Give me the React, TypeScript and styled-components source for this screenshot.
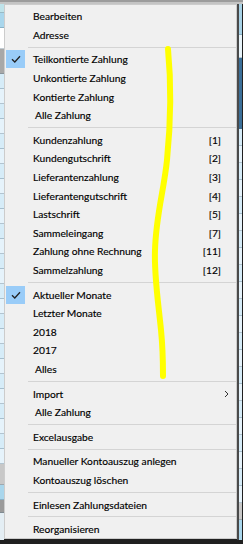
import React from "react";
import styled, { createGlobalStyle } from "styled-components";

const Global = createGlobalStyle`
  html, body { margin: 0; padding: 0; }
  body {
    width: 243px;
    height: 544px;
    overflow: hidden;
    background: #1e1e1e;
    font-family: Lato, "Noto Sans", "DejaVu Sans", sans-serif;
  }
`;

const Screen = styled.div`
  position: relative;
  width: 243px;
  height: 544px;
  overflow: hidden;
  display: flex;
  flex-direction: column;
  background: #202020;
`;

const TopBar = styled.div`
  height: 4px;
  flex: none;
  background: linear-gradient(#9c9c9c 0 2px, #c4c4c4 2px 4px);
`;

const Middle = styled.div`
  display: flex;
  flex: none;
  height: 536px;
  overflow: hidden;
`;

const SideStrip = styled.div<{ $w: number }>`
  width: ${(p) => p.$w}px;
  flex: none;
  display: flex;
  flex-direction: column;
  overflow: hidden;
`;

const Cell = styled.div<{ $h: number; $c: string }>`
  height: ${(p) => p.$h}px;
  flex: none;
  background: ${(p) => p.$c};
  border-bottom: 1px solid rgba(80, 110, 130, 0.35);
`;

const RightEdge = styled.div`
  width: 2px;
  flex: none;
  background: #4a4a4a;
`;

const Menu = styled.div`
  width: 231px;
  flex: none;
  align-self: flex-start;
  background: #f0f0f0;
  border: 1px solid #cccccc;
  padding: 2px 0 0 0;
  display: flex;
  flex-direction: column;
  color: #000000;
  font-size: 10.25px;
  -webkit-text-stroke: 0.15px #000;
`;

const Row = styled.div`
  height: 18.6px;
  flex: none;
  display: flex;
  align-items: center;
  padding-right: 15px;
`;

const CheckCell = styled.div<{ $on?: boolean }>`
  width: 19px;
  height: 18px;
  margin-left: 1px;
  flex: none;
  display: flex;
  align-items: center;
  justify-content: center;
  background: ${(p) => (p.$on ? "#99ccf8" : "transparent")};
`;

const Label = styled.span<{ $indent?: boolean }>`
  margin-left: ${(p) => (p.$indent ? 10 : 8)}px;
  flex: 1;
  white-space: nowrap;
`;

const Shortcut = styled.span`
  white-space: nowrap;
`;

const Arrow = styled.span`
  margin-right: -8px;
  display: flex;
  align-items: center;
`;

const Separator = styled.div`
  height: 6px;
  flex: none;
  display: flex;
  align-items: center;
  padding-left: 23px;
  &::after {
    content: "";
    display: block;
    flex: 1;
    height: 1px;
    background: #d4d4d4;
  }
`;

const Highlighter = styled.svg`
  position: absolute;
  left: 0;
  top: 0;
  pointer-events: none;
`;

type Item = { label?: string; check?: boolean; key?: string; sub?: boolean; indent?: boolean; sep?: boolean };

const items: Item[] = [
  { label: "Bearbeiten" },
  { label: "Adresse" },
  { sep: true },
  { label: "Teilkontierte Zahlung", check: true },
  { label: "Unkontierte Zahlung" },
  { label: "Kontierte Zahlung" },
  { label: "Alle Zahlung", indent: true },
  { sep: true },
  { label: "Kundenzahlung", key: "[1]" },
  { label: "Kundengutschrift", key: "[2]" },
  { label: "Lieferantenzahlung", key: "[3]" },
  { label: "Lieferantengutschrift", key: "[4]" },
  { label: "Lastschrift", key: "[5]" },
  { label: "Sammeleingang", key: "[7]" },
  { label: "Zahlung ohne Rechnung", key: "[11]" },
  { label: "Sammelzahlung", key: "[12]" },
  { sep: true },
  { label: "Aktueller Monate", check: true },
  { label: "Letzter Monate" },
  { label: "2018" },
  { label: "2017" },
  { label: "Alles", indent: true },
  { sep: true },
  { label: "Import", sub: true },
  { label: "Alle Zahlung", indent: true },
  { sep: true },
  { label: "Excelausgabe" },
  { sep: true },
  { label: "Manueller Kontoauszug anlegen" },
  { label: "Kontoauszug löschen" },
  { sep: true },
  { label: "Einlesen Zahlungsdateien" },
  { sep: true },
  { label: "Reorganisieren" },
];

const stripe = (n: number, h: number, a: string, b: string): [number, string][] =>
  Array.from({ length: n }, (_, i) => [h, i % 2 ? b : a] as [number, string]);

const leftCells: [number, string][] = [
  [8, "#bfe3ea"],
  [14, "#a9d6ec"],
  [20, "#ffffff"],
  [24, "#a8a8a8"],
  ...stripe(26, 14, "#d6ecf8", "#e6f3fb"),
  [20, "#c8c8c8"],
  [14, "#a9d6ec"],
  [12, "#9a9a9a"],
  [40, "#e4eef4"],
];

const rightCells: [number, string][] = [
  [30, "#a8d2e6"],
  [22, "#e8f4fa"],
  [70, "#3b6f98"],
  ...stripe(22, 16, "#d6ecf8", "#e6f3fb"),
  [16, "#c8c8c8"],
  [20, "#a9d6ec"],
  [40, "#c0c0c0"],
];

const Check = () => (
  <svg width="10" height="8" viewBox="0 0 10 8">
    <path d="M1 4.2 L3.8 7 L9 1.2" fill="none" stroke="#222" strokeWidth="1.3" />
  </svg>
);

const Chevron = () => (
  <svg width="5" height="8" viewBox="0 0 5 8">
    <path d="M1 1 L4 4 L1 7" fill="none" stroke="#333" strokeWidth="1" />
  </svg>
);

export default function App() {
  return (
    <>
      <Global />
      <Screen>
        <TopBar />
        <Middle>
          <SideStrip $w={4}>
            {leftCells.map(([h, c], i) => (
              <Cell key={i} $h={h} $c={c} />
            ))}
          </SideStrip>
          <Menu>
            {items.map((it, i) =>
              it.sep ? (
                <Separator key={i} />
              ) : (
                <Row key={i}>
                  <CheckCell $on={it.check}>{it.check && <Check />}</CheckCell>
                  <Label $indent={it.indent}>{it.label}</Label>
                  {it.key && <Shortcut>{it.key}</Shortcut>}
                  {it.sub && (
                    <Arrow>
                      <Chevron />
                    </Arrow>
                  )}
                </Row>
              )
            )}
          </Menu>
          <RightEdge />
          <SideStrip $w={3}>
            {rightCells.map(([h, c], i) => (
              <Cell key={i} $h={h} $c={c} />
            ))}
          </SideStrip>
        </Middle>
        <Highlighter width="243" height="544" viewBox="0 0 243 544">
          <path
            d="M168 49 C171 80, 171 120, 167 160 C164 190, 156 215, 155 250 C154 275, 158 300, 161 330 C163 350, 163 365, 163 376"
            fill="none"
            stroke="#ffff00"
            strokeWidth="6"
            strokeLinecap="round"
          />
        </Highlighter>
      </Screen>
    </>
  );
}
